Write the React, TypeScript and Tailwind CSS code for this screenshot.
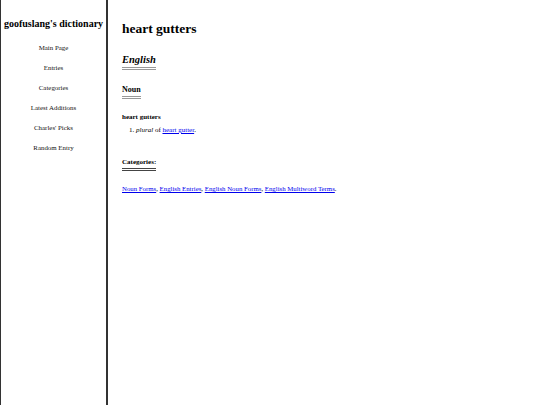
import React from "react";

const serif = { fontFamily: '"Liberation Serif", "Times New Roman", serif' };

export default function App() {
  const nav = ["Main Page", "Entries", "Categories", "Latest Additions", "Charles' Picks", "Random Entry"];
  return (
    <div className="flex h-[405px] w-[540px] bg-white text-black" style={serif}>
      <div className="flex h-full w-[108px] shrink-0 flex-col items-center border-l border-r-2 border-r-[#333] border-l-[#333]">
        <div className="mt-[17px] text-[10px] font-bold leading-[14px] whitespace-nowrap">goofuslang's dictionary</div>
        <div className="mt-[12px] flex flex-col items-center gap-[11px] text-[6.9px] leading-[9px] text-[#111]">
          {nav.map((n) => (
            <div key={n}>{n}</div>
          ))}
        </div>
      </div>
      <div className="flex flex-col pl-[14px] pt-[20px]">
        <div className="text-[13.5px] font-bold leading-[17px]">heart gutters</div>
        <div className="mt-[16px] self-start border-b-[3px] border-double border-[#999] pb-[1px] text-[10.5px] font-bold italic leading-[13px]">English</div>
        <div className="mt-[15px] self-start border-b-[3px] border-double border-[#999] pb-[1px] text-[8px] font-bold leading-[10px]">Noun</div>
        <div className="mt-[14px] text-[7px] font-bold leading-[9px]">heart gutters</div>
        <div className="mt-[4px] pl-[7px] text-[7px] leading-[9px]">
          1. <i>plural</i> of <span className="text-[#0000ee] underline">heart gutter</span>.
        </div>
        <div className="mt-[23px] self-start border-b-[3px] border-double border-[#444] pb-[1px] text-[7px] font-bold leading-[9px]">Categories:</div>
        <div className="mt-[13px] text-[6.8px] leading-[9px] whitespace-nowrap">
          <span className="text-[#0000ee] underline">Noun Forms</span>,{" "}
          <span className="text-[#0000ee] underline">English Entries</span>,{" "}
          <span className="text-[#0000ee] underline">English Noun Forms</span>,{" "}
          <span className="text-[#0000ee] underline">English Multiword Terms</span>.
        </div>
      </div>
    </div>
  );
}
